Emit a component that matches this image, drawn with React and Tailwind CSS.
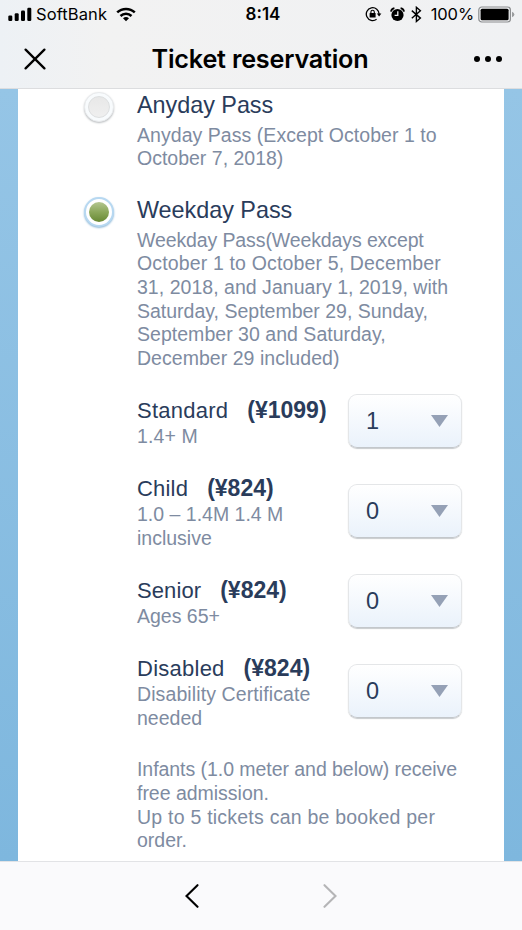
import React from "react";

const prices = [
  { name: "Standard", track: "tracking-[0.25px]", price: "(¥1099)", note: [["1.4+ M", "tracking-[0.1px]"]], qty: 1 },
  { name: "Child", track: "tracking-[0.2px]", price: "(¥824)", note: [["1.0 – 1.4M 1.4 M"], ["inclusive"]], qty: 0 },
  { name: "Senior", track: "tracking-[0.1px]", price: "(¥824)", note: [["Ages 65+"]], qty: 0 },
  { name: "Disabled", track: "tracking-[0.25px]", price: "(¥824)", note: [["Disability Certificate", "tracking-[0.1px]"], ["needed"]], qty: 0 },
];

function StatusBar() {
  return (
    <div className="flex h-7 items-center pl-2 pr-[7px] text-[16.5px]">
      <div className="flex flex-1 items-center">
        <svg width="24" height="15" viewBox="0 0 24 15" className="shrink-0">
          <rect x="0.3" y="8.5" width="4" height="5.5" rx="1.2" />
          <rect x="6.7" y="6.3" width="4" height="7.7" rx="1.2" />
          <rect x="13" y="3.6" width="4" height="10.4" rx="1.2" />
          <rect x="19.3" y="0.8" width="4" height="13.2" rx="1.2" />
        </svg>
        <span className="ml-1 tracking-[0.1px]">SoftBank</span>
        <svg width="20" height="15" viewBox="0 0 20 15" className="ml-[9px]" fill="none" stroke="#000" strokeWidth="2.5">
          <path d="M1.2 5.4a12.8 12.8 0 0 1 17.6 0" />
          <path d="M4.5 9a8 8 0 0 1 11 0" />
          <path d="M7 11.2a4.6 4.6 0 0 1 6 0L10 14.3z" fill="#000" stroke="none" />
        </svg>
      </div>
      <span className="ml-[3px] pt-[2px] text-[17px] font-semibold">8:14</span>
      <div className="flex flex-1 items-center justify-end">
        <svg width="17" height="16" viewBox="0 0 17 16" fill="none" stroke="#000" strokeWidth="1.3">
          <path d="M11.6 13.2A6.4 6.4 0 1 1 14.1 8.2" />
          <path d="M11.8 7.4h4.6l-2.3 3z" fill="#000" stroke="none" />
          <rect x="4.6" y="7" width="6" height="4.4" rx=".5" fill="#000" stroke="none" />
          <path d="M5.9 7.3V6a1.7 1.7 0 0 1 3.4 0v1.3" strokeWidth="1.1" />
        </svg>
        <svg width="15" height="15" viewBox="0 0 15 15" className="ml-2">
          <circle cx="7.5" cy="8" r="6.1" />
          <path d="M.9 4.6A4.4 4.4 0 0 1 4.4 1.2M14.1 4.6a4.4 4.4 0 0 0-3.5-3.4" fill="none" stroke="#000" strokeWidth="1.7" />
          <path d="M7.8 4.2v4.2H4.6" fill="none" stroke="#f1f2f3" strokeWidth="1.3" />
        </svg>
        <svg width="11" height="17" viewBox="0 0 11 17" className="ml-[6px]" fill="none" stroke="#000" strokeWidth="1.4">
          <path d="M.8 4.6l8.6 7.5-4 3.4V1.3l4 3.4L.8 12.3" />
        </svg>
        <span className="ml-[9px] pt-px text-[16.5px] tracking-[-0.1px]">100%</span>
        <svg width="37" height="17" viewBox="0 0 37 17" className="ml-1">
          <rect x=".8" y="1" width="31.6" height="15" rx="3" fill="none" stroke="#8c8e90" strokeWidth="1.2" />
          <rect x="2.6" y="2.8" width="28" height="11.4" rx="1.5" />
          <path d="M34 5.8q2.4 1 2.4 2.7T34 11.2z" fill="#9a9c9e" />
        </svg>
      </div>
    </div>
  );
}

function Header() {
  return (
    <header className="h-[89px] border-b border-[#dcdddf] bg-linear-to-r from-[#edf1f5] via-[#f2f2f2] via-20% to-[#f0f1f3] font-[Inter,sans-serif] text-black">
      <StatusBar />
      <div className="flex h-[61px] items-center pl-6 pr-5">
        <div className="flex-1">
          <svg width="22" height="22" viewBox="0 0 22 22" stroke="#000" strokeWidth="2.3" strokeLinecap="round">
            <path d="M1.6 1.6l18.8 18.8M20.4 1.6L1.6 20.4" />
          </svg>
        </div>
        <h1 className="mr-[6px] pt-[2px] text-[25.2px] font-semibold tracking-[-0.2px]">Ticket reservation</h1>
        <div className="flex flex-1 items-center justify-end gap-[5px]">
          <i className="size-[6px] rounded-full bg-black" />
          <i className="size-[6px] rounded-full bg-black" />
          <i className="size-[6px] rounded-full bg-black" />
        </div>
      </div>
    </header>
  );
}

function Radio({ checked }) {
  return checked ? (
    <span className="flex size-[30px] shrink-0 items-center justify-center rounded-full border-2 border-[#b7d8f1] bg-white shadow-[0_1px_2px_#8fb9d8]">
      <span className="size-[20px] rounded-full bg-linear-to-b from-[#b4c690] via-[#8ba75a] to-[#688934]" />
    </span>
  ) : (
    <span className="flex size-[30px] shrink-0 items-center justify-center rounded-full border border-[#e9ebed] bg-[#f8fbfd] shadow-[0_1px_2px_#b8bbbe]">
      <span className="size-[22px] rounded-full border border-[#dddfe0] bg-linear-to-b from-[#e8e8e8] to-[#efefef]" />
    </span>
  );
}

function Lines({ items }) {
  return (
    <div className="text-[19.5px] leading-[23.7px] text-[#7e8ba1]">
      {items.map(([text, tracking]) => (
        <p key={text} className={`whitespace-nowrap ${tracking || ""}`}>{text}</p>
      ))}
    </div>
  );
}

function Pass({ checked, title, lines }) {
  return (
    <div className="flex gap-[23px]">
      <Radio checked={checked} />
      <div>
        <h2 className="mb-[5.6px] text-[23.4px] leading-[26px] tracking-[-0.03px] text-[#2a3c5b]">{title}</h2>
        <Lines items={lines} />
      </div>
    </div>
  );
}

function Quantity({ value }) {
  return (
    <button className="flex h-[54px] w-[114px] items-center justify-between rounded-[9px] border border-b-[#c3c7cb] border-[#e4e6e8] bg-linear-to-b from-white to-[#eaf2fb] pl-[17px] pr-[13px] text-[23.5px] text-[#2a3c5b] shadow-[0_1px_1px_#c8cbce]">
      <span className="pt-[2px]">{value}</span>
      <svg width="17" height="12" viewBox="0 0 17 12">
        <path d="M0 0h17L8.5 12z" fill="#95a1b6" />
      </svg>
    </button>
  );
}

export default function App() {
  return (
    <div className="flex h-[930px] w-[522px] flex-col overflow-hidden font-['Liberation_Sans',Arial,sans-serif]">
      <Header />
      <main className="h-[772px] overflow-hidden bg-linear-to-b from-[#95c5e6] to-[#7eb7de] px-[18px]">
        <div className="h-full bg-white pl-[66px] pr-[42px] pt-[3px]">
          <div className="h-[105px]">
            <Pass
              title="Anyday Pass"
              lines={[["Anyday Pass (Except October 1 to", "tracking-[0.05px]"], ["October 7, 2018)"]]}
            />
          </div>
          <div className="h-[197px]">
            <Pass
              checked
              title="Weekday Pass"
              lines={[
                ["Weekday Pass(Weekdays except", "tracking-[-0.11px]"],
                ["October 1 to October 5, December", "tracking-[0.15px]"],
                ["31, 2018, and January 1, 2019, with", "tracking-[0.03px]"],
                ["Saturday, September 29, Sunday,"],
                ["September 30 and Saturday,", "tracking-[0.03px]"],
                ["December 29 included)", "tracking-[0.04px]"],
              ]}
            />
          </div>
          <div className="flex justify-between pl-[53px]">
            <div className="flex flex-col gap-[26.6px] pt-[3.4px]">
              {prices.map((p) => (
                <div key={p.name}>
                  <div className="mb-[1.8px] flex h-[26px] items-center gap-[19px] whitespace-nowrap text-[22px] text-[#2a3c5b]">
                    <span className={p.track}>{p.name}</span>
                    <b className="text-[23px]">{p.price}</b>
                  </div>
                  <Lines items={p.note} />
                </div>
              ))}
            </div>
            <div className="flex flex-col gap-9">
              {prices.map((p) => (
                <Quantity key={p.name} value={p.qty} />
              ))}
            </div>
          </div>
          <div className="pl-[53px] pt-[27.8px]">
            <Lines
              items={[
                ["Infants (1.0 meter and below) receive", "tracking-[-0.05px]"],
                ["free admission.", "tracking-[-0.02px]"],
                ["Up to 5 tickets can be booked per", "tracking-[0.23px]"],
                ["order."],
              ]}
            />
          </div>
        </div>
      </main>
      <footer className="flex h-[69px] items-center justify-center gap-[124px] border-t border-[#e2e3e6] bg-[#fafafc]">
        <svg width="14" height="24" viewBox="0 0 14 24" fill="none" stroke="#000" strokeWidth="2.1" strokeLinecap="round">
          <path d="M12.5 1.2L1.5 12l11 10.8" />
        </svg>
        <svg width="14" height="24" viewBox="0 0 14 24" fill="none" stroke="#b5b5b7" strokeWidth="2.1" strokeLinecap="round">
          <path d="M1.5 1.2l11 10.8-11 10.8" />
        </svg>
      </footer>
    </div>
  );
}
